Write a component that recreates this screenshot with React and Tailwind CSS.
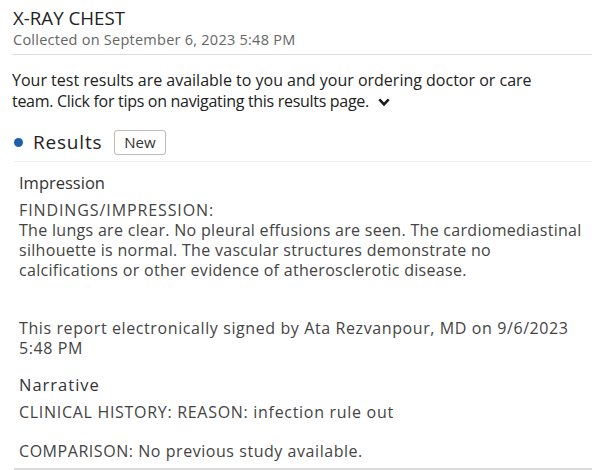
import React from "react";

export default function App() {
  const f = { fontFamily: '"Open Sans", "Liberation Sans", sans-serif' };
  return (
    <div className="w-[592px] h-[470px] bg-white overflow-hidden text-[#222]" style={f}>
      <div className="pl-[13px] pt-[5px]">
        <div className="text-[18.7px] leading-[26px] text-[#222]">X-RAY CHEST</div>
        <div className="text-[14.5px] leading-[17px] tracking-[0.25px] text-[#666]">Collected on September 6, 2023 5:48 PM</div>
      </div>
      <div className="ml-[12px] mt-[6px] h-px bg-[#ddd]" />
      <div className="px-[12px] pt-[15px] text-[16px] leading-[21px] text-[#222] whitespace-nowrap">
        <div>Your test results are available to you and your ordering doctor or care</div>
        <div className="flex items-center">
          <span className="tracking-[-0.3px]">team. Click for tips on navigating this results page.</span>
          <svg className="ml-[9px] mt-[1px]" width="12" height="9" viewBox="0 0 12 9">
            <path d="M1.3 1.4 L6 6.4 L10.7 1.4" fill="none" stroke="#1a1a1a" strokeWidth="2.5" />
          </svg>
        </div>
      </div>
      <div className="flex items-center pl-[13px] mt-[17px] h-[26px]">
        <span className="w-[9px] h-[9px] rounded-full bg-[#1b5fae] ml-[1px]" />
        <span className="ml-[10px] text-[19px] tracking-[0.8px] text-[#222]">Results</span>
        <span className="ml-[12px] border border-[#bbb] rounded-[3px] px-[9px] h-[25px] flex items-center text-[15px] text-[#333]">New</span>
      </div>
      <div className="ml-[14px] mt-[6px] border-t border-[#f0f0f0] pl-[5px] pt-[10px] pb-[7px] border-b-2 border-b-[#ddd] whitespace-nowrap">
        <div className="text-[16.5px] leading-[22px] text-[#333]">Impression</div>
        <div className="mt-[6px] leading-[20px] text-[#444] text-[16px]">
          <div className="tracking-[0.9px]">FINDINGS/IMPRESSION:</div>
          <div className="tracking-[0.3px]">
            <div>The lungs are clear. No pleural effusions are seen. The cardiomediastinal</div>
            <div>silhouette is normal. The vascular structures demonstrate no</div>
            <div>calcifications or other evidence of atherosclerotic disease.</div>
          </div>
          <div className="h-[38px]" />
          <div className="tracking-[0.6px]">
            <div>This report electronically signed by Ata Rezvanpour, MD on 9/6/2023</div>
            <div>5:48 PM</div>
          </div>
        </div>
        <div className="mt-[16px] text-[16.5px] tracking-[1px] leading-[22px] text-[#333]">Narrative</div>
        <div className="mt-[6px] text-[16px] leading-[20px] text-[#444]">
          <div className="tracking-[0.7px]">CLINICAL HISTORY: REASON: infection rule out</div>
          <div className="h-[19px]" />
          <div className="tracking-[0.55px]">COMPARISON: No previous study available.</div>
        </div>
      </div>
    </div>
  );
}
